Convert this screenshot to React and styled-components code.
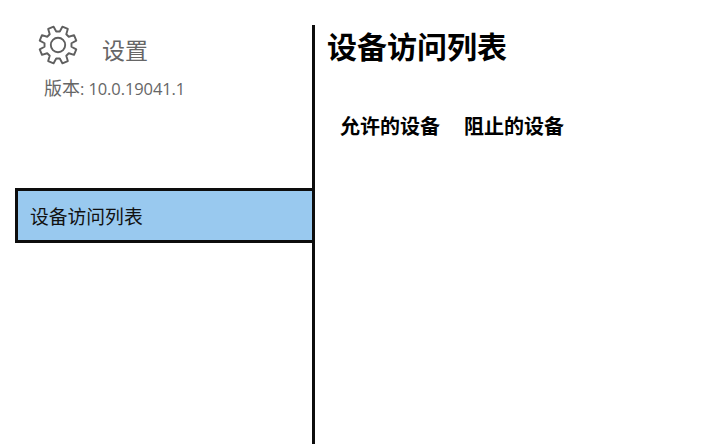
import styled, { createGlobalStyle } from "styled-components";

const GlobalStyle = createGlobalStyle`
  html, body {
    margin: 0;
    padding: 0;
    background: #fff;
    font-family: "Noto Sans CJK SC", "Open Sans", sans-serif;
  }
`;

// eight teeth, turned so two of them sit on top
const gearPath = () => {
  const pt = (r, deg) => {
    const a = (deg * Math.PI) / 180;
    return `${(20 + r * Math.cos(a)).toFixed(2)} ${(20 + r * Math.sin(a)).toFixed(2)}`;
  };
  const points = [];
  for (let i = 0; i < 8; i++) {
    const a = 22.5 + i * 45;
    points.push(pt(13.6, a - 15), pt(18.8, a - 9), pt(18.8, a + 9), pt(13.6, a + 15));
  }
  return "M" + points.join("L") + "Z";
};

const GearIcon = () => (
  <GearSvg viewBox="0 0 40 40">
    <path d={gearPath()} />
    <circle cx="20" cy="20" r="7.2" />
  </GearSvg>
);

const App = () => {
  return (
    <Page>
      <GlobalStyle />
      <Sidebar>
        <Brand>
          <GearIcon />
          <BrandName>设置</BrandName>
        </Brand>
        <Version>
          版本<VersionNumber>: 10.0.19041.1</VersionNumber>
        </Version>
        <NavItem>设备访问列表</NavItem>
      </Sidebar>
      <Main>
        <Title>设备访问列表</Title>
        <Tabs>
          <Tab>允许的设备</Tab>
          <Tab>阻止的设备</Tab>
        </Tabs>
      </Main>
    </Page>
  );
};

const Page = styled.div`
  width: 708px;
  height: 444px;
  padding-top: 25px;
  box-sizing: border-box;
  display: flex;
  overflow: hidden;
`;

const Sidebar = styled.aside`
  width: 315px;
  box-sizing: border-box;
  padding-left: 15px;
  border-right: 3px solid #0d0d0d;
`;

const Brand = styled.div`
  display: flex;
  align-items: flex-start;
  height: 42px;
  padding-left: 23px;
`;

const GearSvg = styled.svg`
  flex: none;
  width: 40px;
  height: 40px;
  fill: none;
  stroke: #5f5f5f;
  stroke-width: 1.9;
  stroke-linejoin: round;
`;

const BrandName = styled.span`
  margin: 9px 0 0 24px;
  font-size: 23px;
  line-height: 30px;
  color: #666;
`;

const Version = styled.div`
  margin: 7px 0 0 29px;
  height: 26px;
  font-size: 18px;
  line-height: 26px;
  color: #666;
`;

const VersionNumber = styled.span`
  font-family: "Open Sans", sans-serif;
  font-size: 16.5px;
  letter-spacing: -0.1px;
`;

const NavItem = styled.div`
  margin-top: 88px;
  height: 55px;
  box-sizing: border-box;
  display: flex;
  align-items: center;
  padding-left: 12px;
  background: #99c9ef;
  border: 3px solid #0d0d0d;
  border-right: none;
  font-size: 18.8px;
  color: #111;
`;

const Main = styled.main`
  flex: 1;
  padding-left: 12px;
`;

const Title = styled.h1`
  margin: -2px 0 0;
  font-size: 30px;
  line-height: 44px;
  font-weight: 700;
  color: #000;
`;

const Tabs = styled.div`
  display: flex;
  gap: 24px;
  margin-top: 44px;
  padding-left: 13px;
`;

const Tab = styled.div`
  font-size: 20px;
  line-height: 30px;
  font-weight: 700;
  color: #000;
`;

export default App;
